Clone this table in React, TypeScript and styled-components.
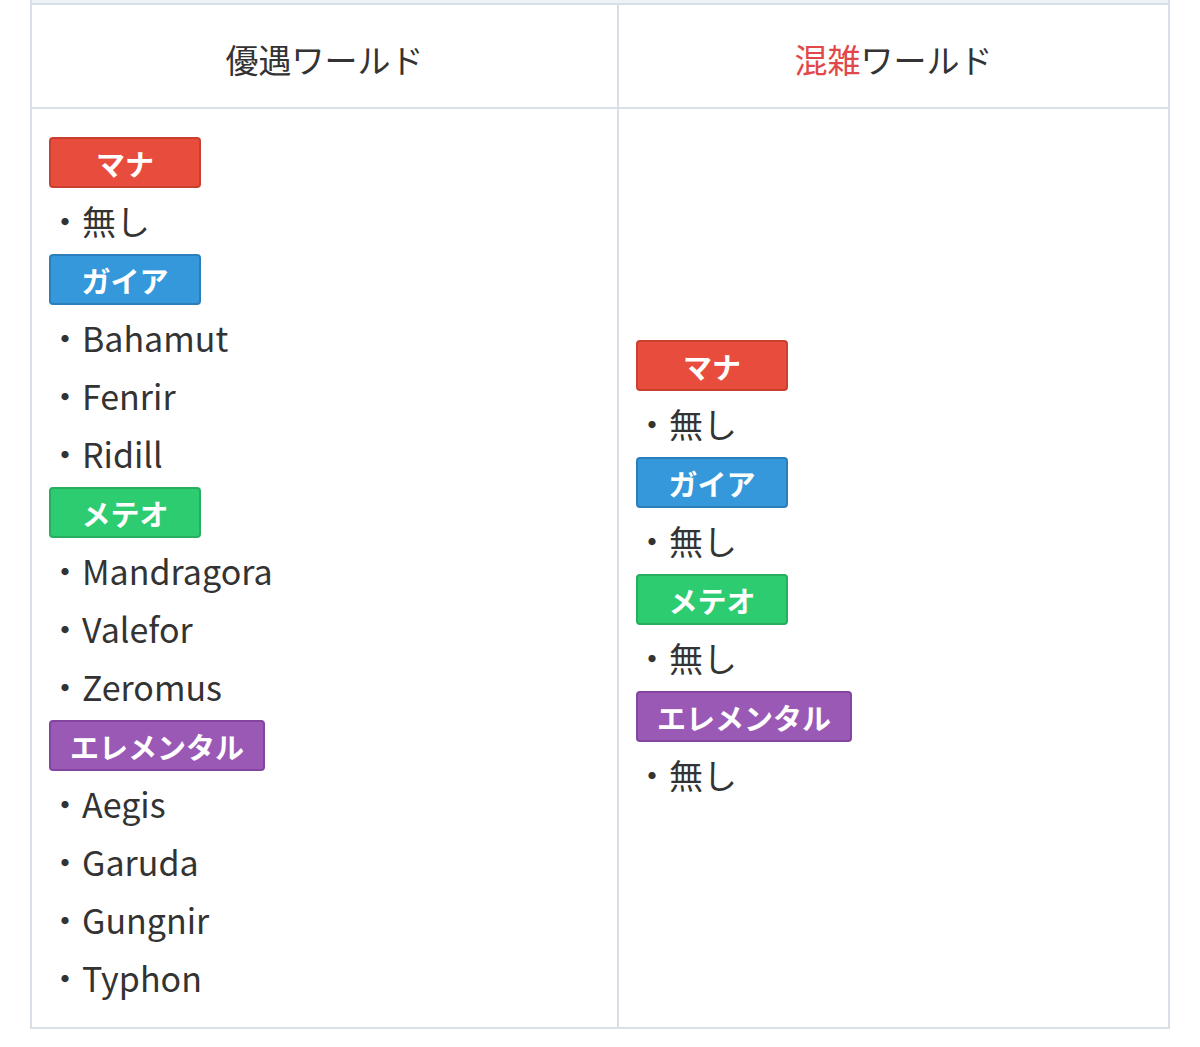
import styled, { createGlobalStyle } from 'styled-components';

const GlobalStyle = createGlobalStyle`
  html, body {
    margin: 0;
    padding: 0;
    background: #ffffff;
  }
  body {
    font-family: "Noto Sans CJK JP", "Noto Sans", sans-serif;
    color: #333333;
  }
`;

type Tone = 'mana' | 'gaia' | 'meteo' | 'elemental';

const tones: Record<Tone, { bg: string; border: string }> = {
  mana: { bg: '#e74c3c', border: '#c9402f' },
  gaia: { bg: '#3498db', border: '#2b80bb' },
  meteo: { bg: '#2ecc71', border: '#27ae60' },
  elemental: { bg: '#9b59b6', border: '#8445a0' },
};

interface Group {
  tone: Tone;
  label: string;
  worlds: string[];
}

const favoured: Group[] = [
  { tone: 'mana', label: 'マナ', worlds: ['無し'] },
  { tone: 'gaia', label: 'ガイア', worlds: ['Bahamut', 'Fenrir', 'Ridill'] },
  { tone: 'meteo', label: 'メテオ', worlds: ['Mandragora', 'Valefor', 'Zeromus'] },
  { tone: 'elemental', label: 'エレメンタル', worlds: ['Aegis', 'Garuda', 'Gungnir', 'Typhon'] },
];

const congested: Group[] = [
  { tone: 'mana', label: 'マナ', worlds: ['無し'] },
  { tone: 'gaia', label: 'ガイア', worlds: ['無し'] },
  { tone: 'meteo', label: 'メテオ', worlds: ['無し'] },
  { tone: 'elemental', label: 'エレメンタル', worlds: ['無し'] },
];

const WorldColumn = ({ groups }: { groups: Group[] }) => (
  <Cell>
    <CellInner>
      {groups.map((group) => (
        <GroupBlock key={group.label}>
          <Badge tone={group.tone}>{group.label}</Badge>
          <WorldList>
            {group.worlds.map((world, index) => (
              <WorldItem key={world + index}>{world}</WorldItem>
            ))}
          </WorldList>
        </GroupBlock>
      ))}
    </CellInner>
  </Cell>
);

const App = () => {
  return (
    <>
      <GlobalStyle />
      <Page>
        <Table>
          <PrevRow />
          <HeaderCell>優遇ワールド</HeaderCell>
          <HeaderCell>
            <Alert>混雑</Alert>ワールド
          </HeaderCell>
          <WorldColumn groups={favoured} />
          <WorldColumn groups={congested} />
        </Table>
      </Page>
    </>
  );
};

export default App;

const Page = styled.div`
  padding: 0 30px;
  height: 1047px;
  box-sizing: border-box;
`;

const Table = styled.div`
  display: grid;
  grid-template-columns: 587px 1fr;
  border-left: 2px solid #d8dfe6;
  border-right: 2px solid #d8dfe6;
  border-bottom: 2px solid #d8dfe6;
`;

const PrevRow = styled.div`
  grid-column: 1 / -1;
  height: 3px;
  background: #eef2f6;
  border-bottom: 2px solid #d8dfe6;
`;

const HeaderCell = styled.div`
  height: 104px;
  display: flex;
  align-items: center;
  justify-content: center;
  padding-top: 5px;
  font-size: 33px;
  color: #333333;
  border-bottom: 2px solid #d8dfe6;
  box-sizing: border-box;
  &:nth-of-type(2) {
    border-right: 2px solid #d8dfe6;
  }
`;

const Alert = styled.span`
  color: #e0484a;
`;

const Cell = styled.div`
  display: flex;
  align-items: center;
  padding: 16px 17px;
  &:nth-of-type(4) {
    border-right: 2px solid #d8dfe6;
  }
`;

const CellInner = styled.div`
  display: flex;
  flex-direction: column;
  padding-top: 12px;
`;

const GroupBlock = styled.div`
  display: flex;
  flex-direction: column;
  align-items: flex-start;
`;

const Badge = styled.span<{ tone: Tone }>`
  display: inline-flex;
  align-items: center;
  justify-content: center;
  box-sizing: border-box;
  height: 51px;
  min-width: 152px;
  padding: 0 19px;
  border-radius: 4px;
  background: ${({ tone }) => tones[tone].bg};
  border: 2px solid ${({ tone }) => tones[tone].border};
  color: #ffffff;
  font-size: 29px;
  font-weight: 700;
`;

const WorldList = styled.ul`
  list-style: none;
  margin: 0;
  padding: 4px 0;
`;

const WorldItem = styled.li`
  font-size: 34px;
  line-height: 58px;
  color: #333333;
  margin-left: -1px;
  &::before {
    content: '・';
  }
`;
